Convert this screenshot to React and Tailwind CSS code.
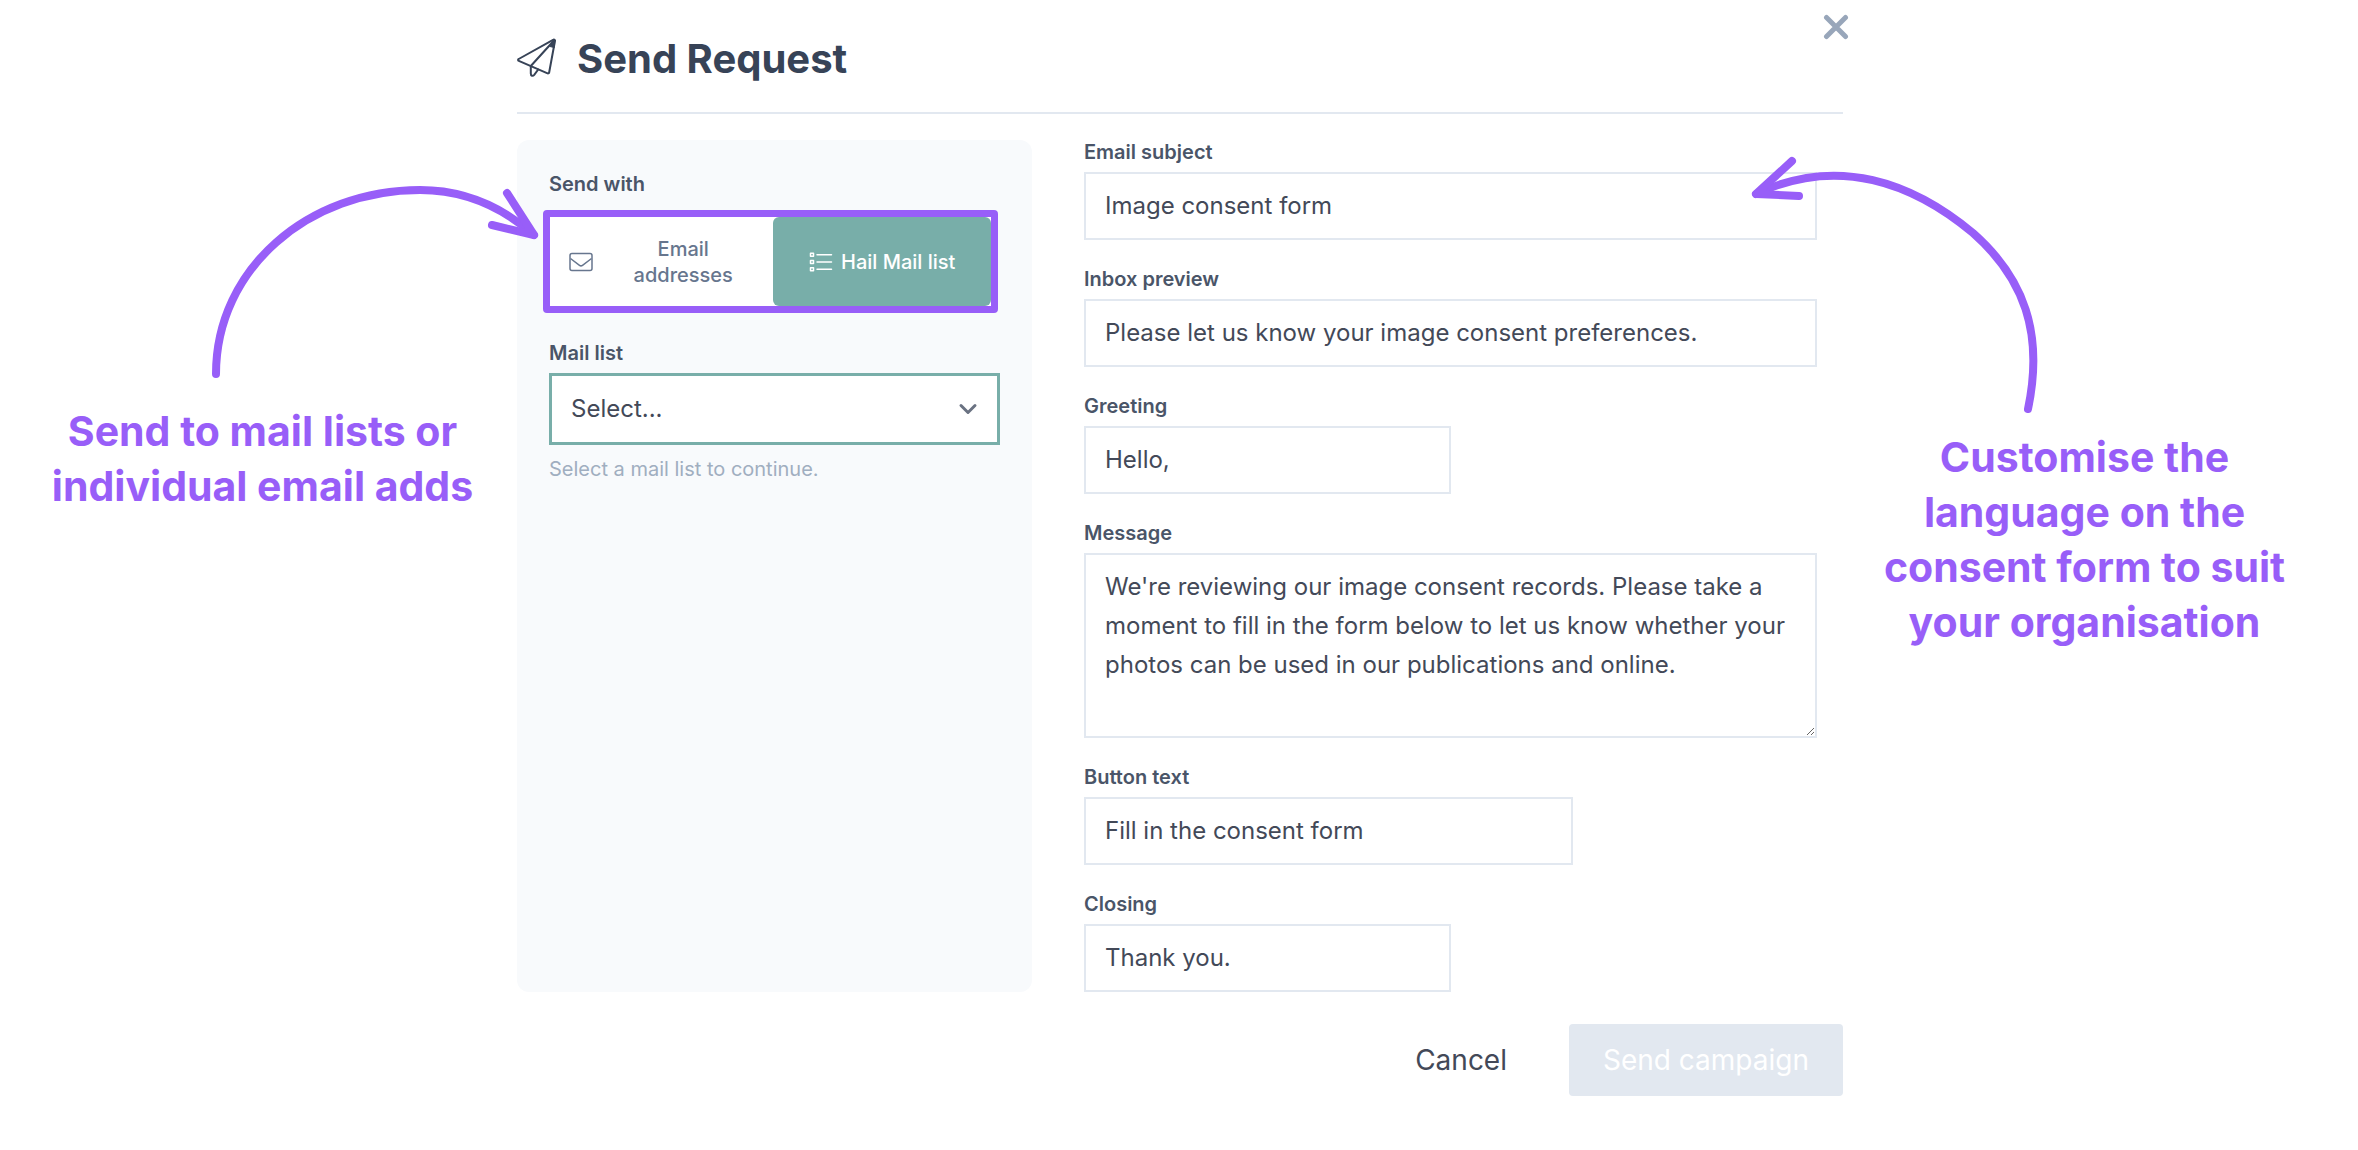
import { useState } from 'react';

const FIELDS = [
    { id: 'subject', label: 'Email subject', value: 'Image consent form', width: 'w-full' },
    { id: 'preview', label: 'Inbox preview', value: 'Please let us know your image consent preferences.', width: 'w-full' },
    { id: 'greeting', label: 'Greeting', value: 'Hello,', width: 'w-1/2' },
    {
        id: 'message',
        label: 'Message',
        value: "We're reviewing our image consent records. Please take a moment to fill in the form below to let us know whether your photos can be used in our publications and online.",
        width: 'w-full',
        multiline: true,
    },
    { id: 'button', label: 'Button text', value: 'Fill in the consent form', width: 'w-2/3' },
    { id: 'closing', label: 'Closing', value: 'Thank you.', width: 'w-1/2' },
];

function PlaneIcon() {
    return (
        <svg className="size-10 shrink-0" viewBox="0 0 40 40" fill="none" stroke="currentColor" strokeWidth="2" strokeLinecap="round" strokeLinejoin="round" aria-hidden="true">
            <path d="M36.500 1.700 1.700 21a1 1 0 0 0 .1 1.900L30.600 35.300a1.200 1.200 0 0 0 1.600-1L38 2.700a1 1 0 0 0-1.500-1Z" />
            <path d="M37 2.500 13.800 28v7.500c0 2.500 2 3 3.400 1.300l4-5.300" />
            <path d="M37.500 2.500 33 8.500l4 1z" fill="currentColor" strokeWidth="1" />
        </svg>
    );
}

function MailIcon() {
    return (
        <svg className="h-5 w-6 shrink-0" viewBox="0 0 24 20" fill="none" stroke="currentColor" strokeWidth="1.500" strokeLinejoin="round" aria-hidden="true">
            <rect x="1" y="1.500" width="22" height="17" rx="2" />
            <path d="m1.500 6.500 9 6.800a2.500 2.500 0 0 0 3 0l9-6.800" />
        </svg>
    );
}

function ListIcon() {
    return (
        <svg className="h-5 w-6 shrink-0" viewBox="0 0 24 20" fill="none" stroke="currentColor" strokeWidth="1.500" strokeLinecap="round" strokeLinejoin="round" aria-hidden="true">
            <path d="M8 2.800h14.500M8 10h14.500M8 17.200h14.500" />
            <path d="M1.500 1.300h3v3h-3zM1.500 8.500h3v3h-3zM1.500 15.700h3v3h-3z" />
        </svg>
    );
}

function Field({ id, label, value, width, multiline }) {
    const [text, setText] = useState(value);
    const box = 'block border-2 border-slate-200 bg-white px-[19px] text-[24px] text-[#434958] outline-none';

    return (
        <div>
            <label htmlFor={id} className="mb-2 block text-[20px] leading-6 font-semibold text-[#4a5568]">{label}</label>
            {multiline ? (
                <textarea id={id} value={text} onChange={e => setText(e.target.value)} className={`${box} ${width} h-[185px] resize-y py-3 leading-[39px]`} />
            ) : (
                <input id={id} type="text" value={text} onChange={e => setText(e.target.value)} className={`${box} ${width} h-[68px] pb-0.5`} />
            )}
        </div>
    );
}

export default function App() {
    const [mode, setMode] = useState('list');

    const tab = active => active
        ? 'rounded-md bg-[#78aea9] text-white'
        : 'bg-white text-[#67768e]';

    return (
        <div className="grid min-h-screen grid-cols-[517fr_1326fr_515fr] bg-white font-['Inter',sans-serif] text-[#434958]">
            {/* Left note */}
            <aside className="relative pt-[404px] text-center text-[41px] leading-[55px] font-bold text-[#985ef8]">
                <svg className="absolute top-[182px] -right-[25px] z-10 h-[200px] w-[333px]" viewBox="0 0 333 200" fill="none" stroke="currentColor" strokeWidth="8" strokeLinecap="round" strokeLinejoin="round" aria-hidden="true">
                    <path d="M7 192C7 86 100 8 211 8c41 0 79 14 114 45" />
                    <path d="M298 11l27 42-42-10" />
                </svg>
                <p className="pl-2">Send to mail lists or<br />individual email adds</p>
            </aside>

            {/* Dialog */}
            <main className="relative">
                <button type="button" aria-label="Close" className="absolute top-3.5 -right-1.5 text-[#98a6ba]">
                    <svg className="size-[26px]" viewBox="0 0 26 26" stroke="currentColor" strokeWidth="5" strokeLinecap="round" aria-hidden="true">
                        <path d="M3.500 3.500l19 19M22.500 3.500l-19 19" />
                    </svg>
                </button>

                <header className="flex h-[114px] items-center gap-5 border-b-2 border-slate-200 pt-1 text-[#374357]">
                    <PlaneIcon />
                    <h1 className="text-[40px] leading-[55px] font-bold">Send Request</h1>
                </header>

                <div className="mt-[26px] grid grid-cols-[515fr_759fr] gap-[52px]">
                    <section className="rounded-xl bg-slate-50 p-8">
                        <h2 className="text-[20px] leading-6 font-semibold text-[#4a5568]">Send with</h2>
                        <div className="mt-3.5 mr-0.5 -ml-1.5 grid h-[103px] grid-cols-[224fr_218fr] rounded-sm border-7 border-[#985ef8] bg-white text-[20px] leading-[26px] font-medium">
                            <button type="button" onClick={() => setMode('email')} className={`flex items-center pl-[19px] ${tab(mode === 'email')}`}>
                                <MailIcon />
                                <span className="flex-1 px-7">Email addresses</span>
                            </button>
                            <button type="button" onClick={() => setMode('list')} className={`flex items-center justify-center gap-2 ${tab(mode === 'list')}`}>
                                <ListIcon />
                                <span>Hail Mail list</span>
                            </button>
                        </div>

                        <label htmlFor="mail-list" className="mt-7 mb-2 block text-[20px] leading-6 font-semibold text-[#4a5568]">Mail list</label>
                        <div className="relative">
                            <select id="mail-list" className="block h-[72px] w-full appearance-none border-3 border-[#78aea9] bg-white px-[19px] text-[24px] text-[#434958] outline-none">
                                <option>Select...</option>
                            </select>
                            <svg className="pointer-events-none absolute top-6 right-5 size-6 text-gray-500" viewBox="0 0 24 24" fill="none" stroke="currentColor" strokeWidth="3" strokeLinecap="round" strokeLinejoin="round" aria-hidden="true">
                                <path d="m5 8.500 7 7 7-7" />
                            </svg>
                        </div>
                        <p className="mt-3 text-[20px] leading-6 text-[#a0aec0]">Select a mail list to continue.</p>
                    </section>

                    <form className="flex flex-col gap-[27px] pr-[26px]">
                        {FIELDS.map(field => <Field key={field.id} {...field} />)}
                    </form>
                </div>

                <footer className="mt-8 mb-14 flex justify-end gap-7 text-[28px]">
                    <button type="button" className="h-[72px] px-[34px]">Cancel</button>
                    <button type="button" disabled className="h-[72px] rounded-sm bg-slate-200 px-[34px] text-white">Send campaign</button>
                </footer>
            </main>

            {/* Right note */}
            <aside className="relative pt-[430px] text-center text-[41px] leading-[55px] font-bold text-[#985ef8]">
                <svg className="absolute top-[153px] -left-[95px] z-10 h-[264px] w-[296px]" viewBox="0 0 296 264" fill="none" stroke="currentColor" strokeWidth="8" strokeLinecap="round" strokeLinejoin="round" aria-hidden="true">
                    <path d="M280 256C296 180 276 125 225 80 165 30 90 2 8 41" />
                    <path d="M44 8L8 41l43 2" />
                </svg>
                <p className="pr-8">Customise the<br />language on the<br />consent form to suit<br />your organisation</p>
            </aside>
        </div>
    );
}
